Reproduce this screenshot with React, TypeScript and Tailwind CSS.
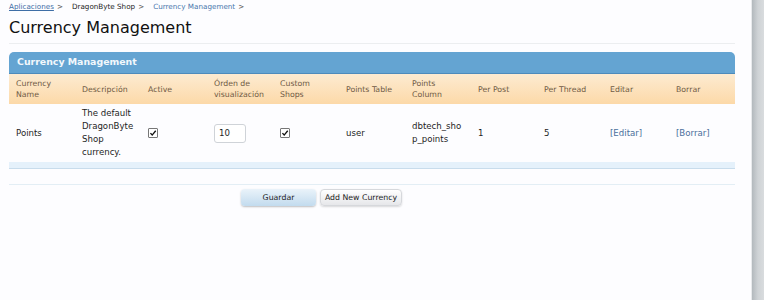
import React from 'react';

const font = "font-['DejaVu_Sans',Verdana,sans-serif]";

const Check: React.FC = () => (
  <span className="inline-flex items-center justify-center w-[10px] h-[10px] border border-[#777] bg-white rounded-[1px]">
    <svg viewBox="0 0 10 10" className="w-[8px] h-[8px]">
      <path d="M1.8 5.2 L4 7.6 L8.4 2.2" fill="none" stroke="#111" strokeWidth="1.7" />
    </svg>
  </span>
);

const headers: string[][] = [
  ['Currency', 'Name'],
  ['Descripción'],
  ['Active'],
  ['Órden de', 'visualización'],
  ['Custom', 'Shops'],
  ['Points Table'],
  ['Points', 'Column'],
  ['Per Post'],
  ['Per Thread'],
  ['Editar'],
  ['Borrar'],
];

const Cell: React.FC<{ children: React.ReactNode }> = ({ children }) => (
  <div className="w-[66px] shrink-0 pl-[7px] flex items-center">{children}</div>
);

export default function App() {
  return (
    <div className={`flex w-[764px] h-[300px] bg-white ${font}`}>
      <div className="w-[751px] h-full bg-[#fdfdff] px-[9px] pt-[3px]">
        {/* breadcrumb */}
        <div className="flex items-center h-[9px] text-[7.2px] gap-[3px]">
          <span className="text-[#3e6ea6] underline">Aplicaciones</span>
          <span className="text-[#555] mr-[6px]">&gt;</span>
          <span className="text-[#222]">DragonByte Shop</span>
          <span className="text-[#555] mr-[6px]">&gt;</span>
          <span className="text-[#4a78ad]">Currency Management</span>
          <span className="text-[#555]">&gt;</span>
        </div>
        <h1 className="text-[16px] leading-[20px] text-[#111] mt-[6px] mb-0">Currency Management</h1>
        <div className="h-px bg-[#eceef0] w-[726px] mt-[5px]" />

        {/* block */}
        <div className="mt-[8px] w-[726px]">
          <div className="h-[22px] bg-[#64a4d2] rounded-t-[5px] border-b border-[#4d8bbb] flex items-center pl-[8px] text-[9.4px] font-bold text-[#f3f8fc]">
            Currency Management
          </div>
          <div className="h-[30px] flex bg-gradient-to-b from-[#fdebd1] to-[#fcd9a8] text-[7.8px] leading-[11px] text-[#6f5a44]">
            {headers.map((h, i) => (
              <Cell key={i}>
                <div>
                  {h.map((l, j) => (
                    <div key={j}>{l}</div>
                  ))}
                </div>
              </Cell>
            ))}
          </div>
          <div className="h-[58px] flex text-[8.6px] leading-[13px] text-[#1e1e1e]">
            <Cell>Points</Cell>
            <Cell>
              <div>
                <div>The default</div>
                <div>DragonByte</div>
                <div>Shop</div>
                <div>currency.</div>
              </div>
            </Cell>
            <Cell><Check /></Cell>
            <Cell>
              <div className="w-[32px] h-[19px] border border-[#cfd3d8] rounded-[3px] bg-white flex items-center pl-[4px]">10</div>
            </Cell>
            <Cell><Check /></Cell>
            <Cell>user</Cell>
            <Cell>
              <div>
                <div>dbtech_sho</div>
                <div>p_points</div>
              </div>
            </Cell>
            <Cell>1</Cell>
            <Cell>5</Cell>
            <Cell><span className="text-[#4a6f9c]">[Editar]</span></Cell>
            <Cell><span className="text-[#4a6f9c]">[Borrar]</span></Cell>
          </div>
          <div className="h-[7px] bg-[#e5f1fb] border-b border-[#c8dcec]" />
          <div className="h-[15px]" />
          <div className="h-px bg-[#e3eef5]" />
          <div className="flex gap-[4px] pl-[232px] mt-[4px]">
            <button className="w-[75px] h-[17px] rounded-[4px] bg-gradient-to-b from-[#eaf3fa] to-[#c2dbee] shadow-[0_1px_2px_rgba(0,0,0,0.25)] text-[7.8px] text-[#222]">
              Guardar
            </button>
            <button className="w-[82px] h-[17px] rounded-[4px] bg-gradient-to-b from-[#ffffff] to-[#e6e7ea] border border-[#d6d8dc] shadow-[0_1px_2px_rgba(0,0,0,0.15)] text-[7.8px] text-[#222]">
              Add New Currency
            </button>
          </div>
        </div>
      </div>
      <div className="w-[13px] h-full bg-gradient-to-r from-[#b3b9bd] via-[#cfd3d6] to-[#d9dcde] border-l border-[#e8eaec]" />
    </div>
  );
}
